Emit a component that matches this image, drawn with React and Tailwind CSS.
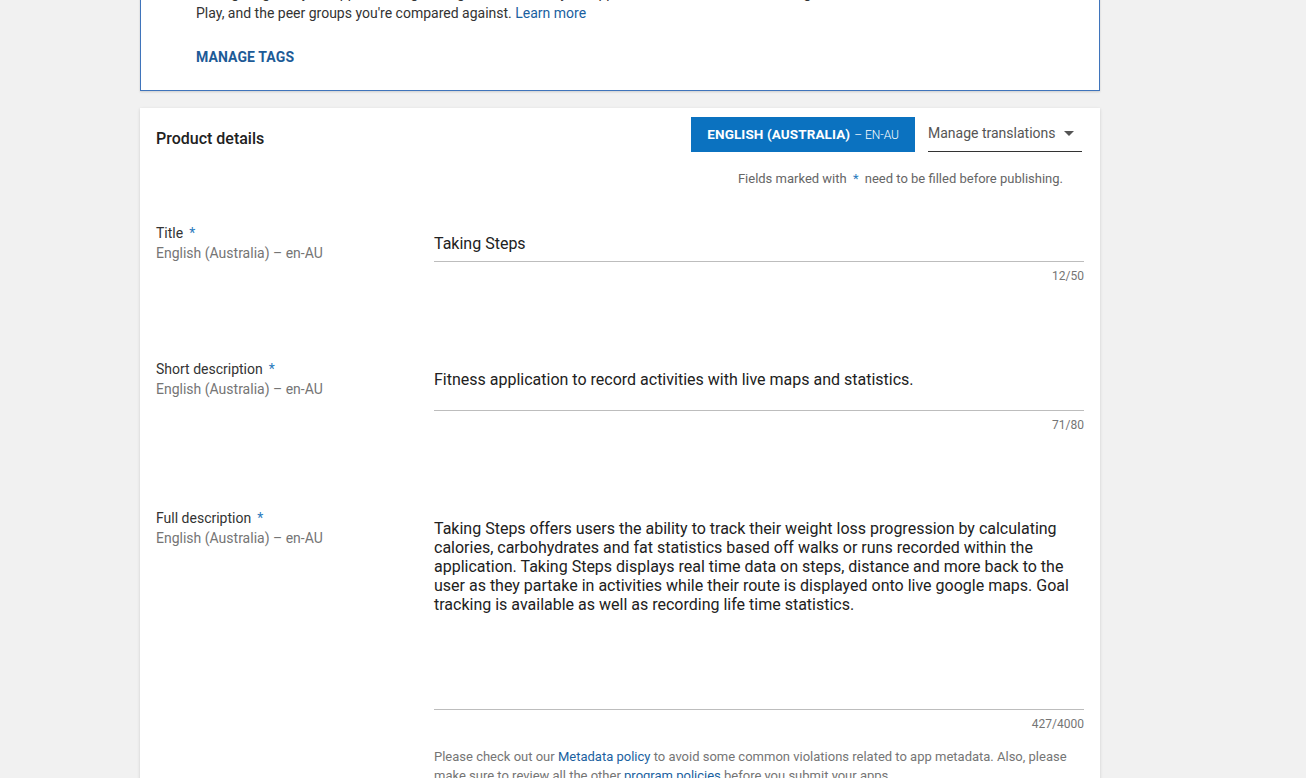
export default function App() {
  const font = { fontFamily: 'Roboto, "Noto Sans", sans-serif' };
  const Star = () => <span className="text-[#2b7bbd] ml-[6px]">*</span>;
  return (
    <div className="w-[1306px] h-[778px] overflow-hidden bg-[#f1f1f1]" style={font}>
      <div className="w-[960px] ml-[140px]">
        {/* Top card */}
        <div className="mt-[-38px] bg-white border border-[#3f74bb] shadow-[0_1px_2px_rgba(0,0,0,0.15)] pt-[20px] pb-[23px] pl-[55px] pr-[56px]">
          <p className="text-[14px] leading-[20px] text-[#333] whitespace-nowrap overflow-hidden">
            Manage tags for your app, including the tags that describe your app's content and features on Google
          </p>
          <p className="text-[14px] leading-[20px] text-[#333]">
            Play, and the peer groups you're compared against. <span className="text-[#1a5fa0]">Learn more</span>
          </p>
          <div className="mt-[24px] text-[14px] leading-[20px] font-bold text-[#1d5b97] tracking-[0.1px]">MANAGE TAGS</div>
        </div>

        {/* Product details card */}
        <div className="mt-[17px] bg-white shadow-[0_1px_3px_rgba(0,0,0,0.15)] pt-[10px] pl-[16px] pr-[16px] pb-[40px]">
          <div className="flex items-start justify-between pr-[2px]">
            <div className="mt-[9px] text-[16px] leading-[24px] font-medium text-[#212121]">Product details</div>
            <div className="mt-[-1px] flex items-start gap-[13px]">
              <div className="h-[35px] pl-[16px] pr-[16px] bg-[#0b72c0] flex items-center text-white">
                <span className="text-[13.5px] font-bold tracking-[0.1px]">ENGLISH (AUSTRALIA)</span>
                <span className="text-[12px] font-light ml-[4px]">– EN-AU</span>
              </div>
              <div className="w-[154px] h-[35px] border-b border-[#333] flex items-center justify-between pb-[2px]">
                <span className="text-[14px] text-[#555]">Manage translations</span>
                <svg width="10" height="5" viewBox="0 0 10 5" className="mr-[8px]">
                  <path d="M0 0 L10 0 L5 5 Z" fill="#555" />
                </svg>
              </div>
            </div>
          </div>
          <div className="mt-[18px] pr-[21px] text-right text-[13px] leading-[18px] text-[#666]">
            Fields marked with <span className="text-[#2b7bbd] mx-[3px]">*</span> need to be filled before publishing.
          </div>

          {/* Title */}
          <div className="mt-[35px] grid grid-cols-[278px_650px]">
            <div className="text-[14px] leading-[20px]">
              <div className="text-[#333]">Title<Star /></div>
              <div className="text-[#757575]">English (Australia) – en-AU</div>
            </div>
            <div className="pt-[9px]">
              <div className="border-b border-[#bdbdbd] pb-[5px] text-[16px] leading-[24px] text-[#212121]">Taking Steps</div>
              <div className="mt-[6px] text-right text-[12px] leading-[16px] text-[#757575]">12/50</div>
            </div>
          </div>

          {/* Short description */}
          <div className="mt-[75px] grid grid-cols-[278px_650px]">
            <div className="text-[14px] leading-[20px]">
              <div className="text-[#333]">Short description<Star /></div>
              <div className="text-[#757575]">English (Australia) – en-AU</div>
            </div>
            <div className="pt-[9px]">
              <div className="border-b border-[#bdbdbd] pb-[18px] text-[16px] leading-[24px] text-[#212121]">
                Fitness application to record activities with live maps and statistics.
              </div>
              <div className="mt-[6px] text-right text-[12px] leading-[16px] text-[#757575]">71/80</div>
            </div>
          </div>

          {/* Full description */}
          <div className="mt-[75px] grid grid-cols-[278px_650px]">
            <div className="text-[14px] leading-[20px]">
              <div className="text-[#333]">Full description<Star /></div>
              <div className="text-[#757575]">English (Australia) – en-AU</div>
            </div>
            <div className="pt-[11px]">
              <div className="h-[191px] border-b border-[#bdbdbd] text-[16px] leading-[19px] text-[#212121]">
                Taking Steps offers users the ability to track their weight loss progression by calculating calories, carbohydrates and fat statistics based off walks or runs recorded within the application. Taking Steps displays real time data on steps, distance and more back to the user as they partake in activities while their route is displayed onto live google maps. Goal tracking is available as well as recording life time statistics.
              </div>
              <div className="mt-[6px] text-right text-[12px] leading-[16px] text-[#757575]">427/4000</div>
              <p className="mt-[15px] text-[13px] leading-[19px] text-[#757575]">
                Please check out our <span className="text-[#1a5fa0]">Metadata policy</span> to avoid some common violations related to app metadata. Also, please make sure to review all the other <span className="text-[#1a5fa0]">program policies</span> before you submit your apps.
              </p>
            </div>
          </div>
        </div>
      </div>
    </div>
  );
}
